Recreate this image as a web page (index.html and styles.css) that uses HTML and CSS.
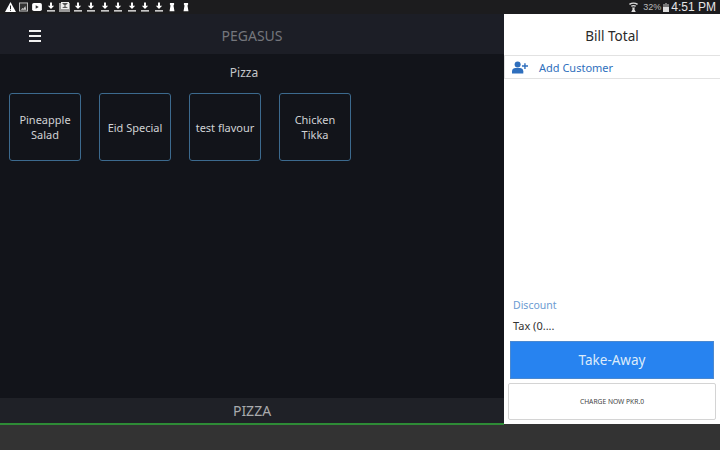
FILE: index.html
```html
<!DOCTYPE html>
<html lang="en">

<head>
    <meta charset="UTF-8">
    <meta name="viewport" content="width=device-width, initial-scale=1.0">
    <link rel="stylesheet" href="styles.css">
    <title>Pegasus</title>
</head>

<body>

    <svg width="0" height="0" class="defs">
        <symbol id="dl" viewBox="0 0 10 11">
            <path d="M3.800 0h2.400v4H9L5 8 1 4h2.800zM0 9.600h10V11H0z" fill="#fff" />
        </symbol>
        <symbol id="pawn" viewBox="0 0 8 11">
            <path d="M1.500 0h5l.5 1.500-1 2.400.5 2.600.8 4.500H.7l.8-4.500.5-2.600-1-2.400z" fill="#fff" />
        </symbol>
    </svg>

    <div class="status-bar">
        <div class="status-icons">
            <svg width="11" height="10" viewBox="0 0 11 10">
                <path d="M5.500 0 11 10H0z" fill="#fff" />
                <path d="M5 3.500h1v3.500H5zM5 7.800h1v1H5z" fill="#222" />
            </svg>
            <svg width="9" height="10" viewBox="0 0 10 10">
                <path d="M0 0h10v10H0z" fill="#ccc" />
                <path d="M1 1h8v8H1z" fill="#333" />
                <path d="M2 8l2-2 1 1 2-3 1 4z" fill="#ccc" />
            </svg>
            <svg width="10" height="8" viewBox="0 0 11 9">
                <rect width="11" height="9" rx="2" fill="#fff" />
                <path d="M4 2.500 7.500 4.500 4 6.500z" fill="#333" />
            </svg>
            <svg width="8" height="10"><use href="#dl" /></svg>
            <svg width="11" height="10" viewBox="0 0 11 10">
                <path d="M0 1h11v9H0z" fill="#999" />
                <path d="M2 0h8v7H2z" fill="#eee" />
                <path d="M3 1h6L6 4zM3 6l3-2 3 2z" fill="#555" />
            </svg>
            <svg width="8" height="10"><use href="#dl" /></svg>
            <svg width="8" height="10"><use href="#dl" /></svg>
            <svg width="8" height="10"><use href="#dl" /></svg>
            <svg width="8" height="10"><use href="#dl" /></svg>
            <svg width="8" height="10"><use href="#dl" /></svg>
            <svg width="8" height="10"><use href="#dl" /></svg>
            <svg width="8" height="10"><use href="#dl" /></svg>
            <svg width="6" height="10"><use href="#pawn" /></svg>
            <svg width="6" height="10"><use href="#pawn" /></svg>
        </div>
        <div class="status-right">
            <svg width="9" height="10" viewBox="0 0 10 11">
                <path d="M0 2Q5-1 10 2L9 3.200Q5 .8 1 3.200zM2 4.200Q5 2.400 8 4.200L7 5.300Q5 4.300 3 5.300z" fill="#ddd" />
                <path d="M3.500 6h3L6 8l1.500 3h-5L4 8z" fill="#ddd" />
            </svg>
            <span class="battery-text">32%</span>
            <svg width="6" height="9" viewBox="0 0 6 9">
                <path d="M2 0h2v1h2v8H0V1h2z" fill="#777" />
                <path d="M0 4h6v5H0z" fill="#ddd" />
            </svg>
            <span class="clock">4:51 PM</span>
        </div>
    </div>

    <div class="main">
        <div class="left">
            <div class="header">
                <div class="burger"><span></span><span></span><span></span></div>
                <div class="brand">PEGASUS</div>
            </div>
            <div class="content">
                <div class="cat-title">Pizza</div>
                <div class="items">
                    <div class="item">Pineapple Salad</div>
                    <div class="item">Eid Special</div>
                    <div class="item">test flavour</div>
                    <div class="item">Chicken Tikka</div>
                </div>
            </div>
            <div class="tab">PIZZA</div>
        </div>

        <div class="bill">
            <div class="bill-title">Bill Total</div>
            <div class="customer">
                <svg width="16" height="13" viewBox="0 0 17 13">
                    <circle cx="6" cy="3.200" r="3.200" fill="#2f6fbd" />
                    <path d="M0 13v-2.500C0 8 2 7 3.500 7h5C10 7 12 8 12 10.500V13z" fill="#2f6fbd" />
                    <path d="M13 2h1.500v2.200H17v1.400h-2.500V8H13V5.600h-2.400V4.200H13z" fill="#2f6fbd" />
                </svg>
                <span>Add Customer</span>
            </div>
            <div class="bill-items"></div>
            <div class="discount">Discount</div>
            <div class="tax">Tax (0....</div>
            <div class="take-away">Take-Away</div>
            <div class="charge">CHARGE NOW PKR.0</div>
        </div>
    </div>

    <div class="bottom-bar"></div>

</body>

</html>
```

FILE: styles.css
```css
* {
    box-sizing: border-box;
}

html,
body {
    height: 100%;
}

body {
    font-family: 'Noto Sans', sans-serif;
    margin: 0;
    width: 720px;
    height: 450px;
    overflow: hidden;
    display: flex;
    flex-direction: column;
    background-color: #333;
}

.defs {
    display: none;
}

.status-bar {
    height: 14px;
    background-color: #1c1c1e;
    display: flex;
    justify-content: space-between;
    align-items: center;
    padding: 0 4px 0 3.500px;
}

.status-icons {
    display: grid;
    grid-template-columns: repeat(14, 13.500px);
    justify-items: center;
    align-items: center;
}

.status-right {
    display: flex;
    align-items: center;
    gap: 2px;
    color: #ddd;
}

.battery-text {
    font-family: 'Liberation Sans', sans-serif;
    font-size: 9px;
    color: #bbb;
    margin-left: 3px;
}

.clock {
    font-family: 'Liberation Sans', sans-serif;
    font-size: 12px;
    color: #e6e6e6;
}

.main {
    height: 411px;
    display: flex;
}

.left {
    width: 504px;
    display: flex;
    flex-direction: column;
}

.header {
    height: 40px;
    background-color: #1c1e26;
    display: flex;
    align-items: center;
}

.burger {
    margin: 4px 0 0 29px;
    width: 12px;
    display: flex;
    flex-direction: column;
    gap: 3px;
}

.burger span {
    height: 2px;
    background-color: #f0f0f0;
}

.brand {
    flex: 1;
    margin-right: 41px;
    padding-top: 2px;
    text-align: center;
    font-size: 14px;
    color: #74767c;
}

.content {
    flex: 1;
    background-color: #12141a;
    padding: 10px 9px 0;
}

.cat-title {
    margin-right: 16px;
    text-align: center;
    font-size: 12px;
    line-height: 17px;
    color: #c4c6ca;
}

.items {
    display: flex;
    gap: 18px;
    margin-top: 12px;
}

.item {
    width: 72px;
    height: 68px;
    border: 1px solid #3c6a8e;
    border-radius: 3px;
    padding: 0 1px;
    display: flex;
    align-items: center;
    justify-content: center;
    text-align: center;
    font-size: 11px;
    line-height: 15px;
    color: #d0d2d5;
}

.tab {
    height: 27px;
    background-color: #1f2127;
    text-align: center;
    font-size: 14px;
    line-height: 25px;
    color: #a8aaad;
}

.bill {
    width: 216px;
    height: 410px;
    background-color: #fff;
    display: flex;
    flex-direction: column;
}

.bill-title {
    height: 42px;
    text-align: center;
    font-size: 13.500px;
    line-height: 44px;
    color: #2a2a2a;
    border-bottom: 1px solid #e2e2e2;
}

.customer {
    height: 23px;
    display: flex;
    align-items: center;
    gap: 11px;
    padding: 1px 0 0 7px;
    font-size: 11px;
    color: #2f6fbd;
    border-bottom: 1px solid #e2e2e2;
    border-left: 1px solid #e2e2e2;
}

.bill-items {
    flex: 1;
}

.discount {
    padding-left: 9px;
    font-size: 10.500px;
    line-height: 16px;
    color: #6c9bd2;
}

.tax {
    padding-left: 9px;
    margin-top: 5px;
    font-size: 11px;
    line-height: 16px;
    color: #333;
}

.take-away {
    height: 38px;
    margin: 7px 6px 0;
    background-color: #2783f0;
    border: 1px solid #4a88d0;
    text-align: center;
    font-size: 13.500px;
    line-height: 36px;
    color: #dcebfb;
}

.charge {
    height: 37px;
    margin: 4px;
    background-color: #fff;
    border: 1px solid #d4d4d4;
    border-radius: 2px;
    text-align: center;
    font-size: 6.700px;
    line-height: 35px;
    color: #444;
}

.bottom-bar {
    flex: 1;
    background-color: #333;
    position: relative;
}

.bottom-bar::before {
    content: "";
    position: absolute;
    left: 0;
    top: -2px;
    width: 504px;
    height: 2px;
    background-color: #2e8b36;
}
```
